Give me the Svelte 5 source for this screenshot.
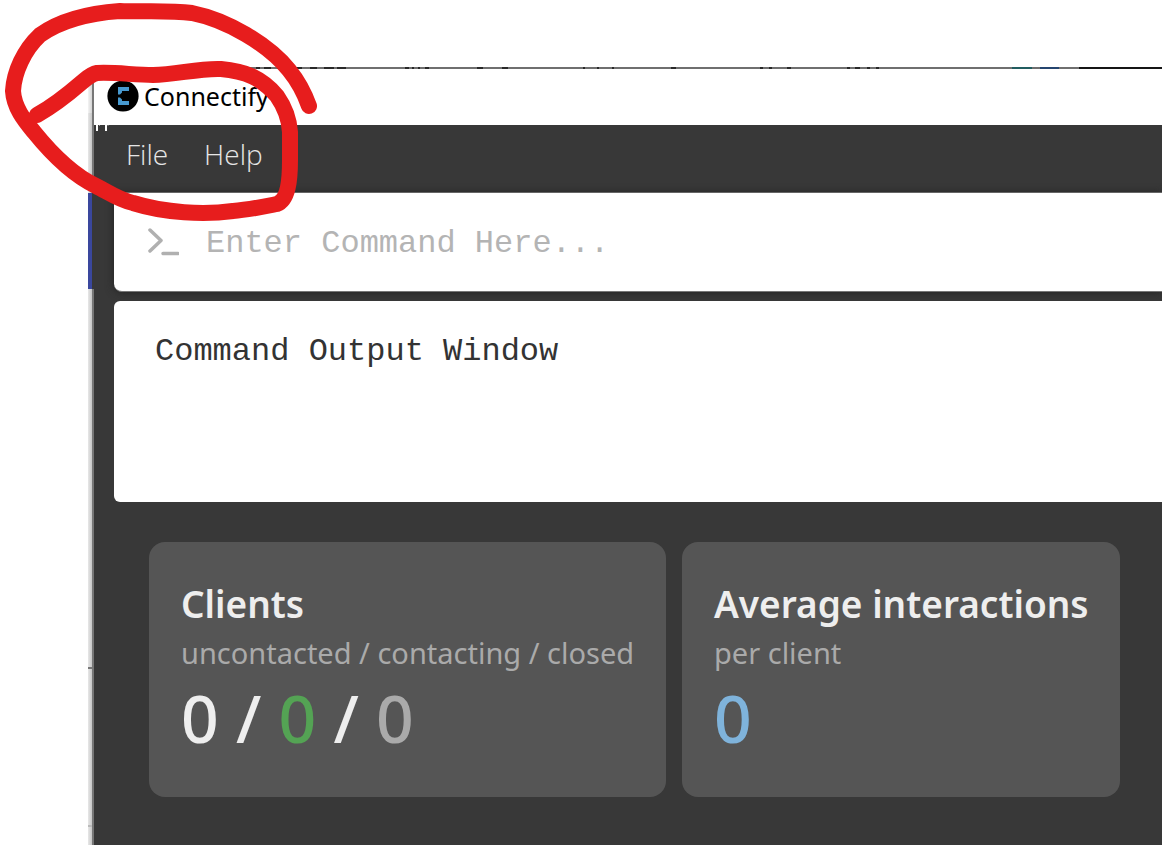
<script>
  const menus = ['File', 'Help'];
  let command = $state('');
</script>

<div class="desktop">
  <div class="edge" aria-hidden="true">
    <i class="light"></i>
    <i class="pale"></i>
    <i class="blue"></i>
    <i class="long"></i>
    <i class="tick"></i>
    <i class="mid"></i>
    <i class="tick faint"></i>
    <i class="rest"></i>
  </div>

  <div class="window">
    <div class="topline" aria-hidden="true">
      <svg viewBox="0 0 890 2" width="890" height="2">
        <path d="M162 1h4M170 1h7M183 1h8M200 1h8M216 1h7M230 1h10M243 1h9M311 1h4M318 1h2M324 1h2M331 1h4M383 1h6M408 1h6M489 1h2M503 1h2M518 1h2M577 1h5M666 1h3M675 1h3M693 1h4M753 1h3M761 1h5M773 1h3M782 1h3" stroke="#292929" stroke-width="2" />
      </svg>
    </div>
    <header class="titlebar">
      <svg class="logo" viewBox="0 0 32 32" aria-hidden="true">
        <circle cx="16" cy="16" r="15.6" fill="#000" />
        <path d="M11 7h11v4h-7v1.500l-2 2h-2zM11 17.500h2l2 2V21h7v4H11z" fill="#4799cf" />
      </svg>
      <span>Connectify</span>
    </header>

    <nav class="menubar">
      {#each menus as menu}
        <button type="button">{menu}</button>
      {/each}
      <svg class="fragment" viewBox="0 0 14 6" aria-hidden="true">
        <path d="M2 0v6M11 0v6" stroke="#fff" stroke-width="2" />
        <path d="M4.500 0v1M13 0v1" stroke="#999" />
      </svg>
    </nav>

    <main>
      <label class="command">
        <svg viewBox="0 0 32 30" aria-hidden="true">
          <path d="M3 3l11 10.500L3 24M16 26.500h15" fill="none" stroke="#b0b0b0" stroke-width="3.500" stroke-linecap="round" stroke-linejoin="round" />
        </svg>
        <input type="text" aria-label="Command" placeholder="Enter Command Here..." bind:value={command} />
      </label>

      <section class="output">Command Output Window</section>

      <div class="cards">
        <section class="card">
          <h2>Clients</h2>
          <p class="caption">uncontacted / contacting / closed</p>
          <p class="figures">0 / <span class="green">0</span> / <span class="gray">0</span></p>
        </section>
        <section class="card">
          <h2>Average interactions</h2>
          <p class="caption">per client</p>
          <p class="figures"><span class="sky">0</span></p>
        </section>
      </div>
    </main>
  </div>

  <svg class="scribble" viewBox="0 0 330 230" aria-hidden="true">
    <path d="M309 106C304 92 298 81 289 70C268 44 227 20 192 13C168 10 143 12 120 11C92 13 61 20 40 35C24 50 14 72 13 91C14 108 25 121 34 132C51 153 71 174 96 186C108 192 119 200 133 203C165 213 204 215 233 211C248 210 262 207 277 204C288 200 290 180 290 160V132C289 116 284 106 277 96C262 78 245 71 221 69C198 68 176 75 153 75C134 75 115 72 97 73C91 74 86 79 81 83C66 96 53 106 37 115" />
  </svg>
</div>

<style>
  :global(body) {
    margin: 0;
    background: #fff;
  }
  .desktop {
    position: relative;
    display: flex;
    min-height: 100vh;
    box-sizing: border-box;
    padding-top: 67px;
    overflow: hidden;
    font-family: 'Noto Sans', sans-serif;
  }
  .edge {
    display: flex;
    flex-direction: column;
    width: 6px;
    margin-left: 88px;
    padding-top: 16px;
    box-sizing: border-box;
    background: #fff;
  }
  .edge i {
    box-sizing: border-box;
    border-right: 2px solid #777;
    background: linear-gradient(90deg, #e8e8e8, #c6c6c6);
  }
  .edge .light {
    height: 30px;
    background: linear-gradient(90deg, #f4f4f4, #d4d4d4);
  }
  .edge .pale {
    height: 80px;
  }
  .edge .blue {
    height: 96px;
    border-color: #383838;
    background: #3a479d;
  }
  .edge .long {
    height: 378px;
  }
  .edge .tick {
    height: 2px;
    background: #777;
  }
  .edge .mid {
    height: 156px;
  }
  .edge .faint {
    background: #bbb;
  }
  .edge .rest {
    flex: 1;
  }
  .window {
    display: flex;
    flex: 1;
    flex-direction: column;
    min-width: 0;
    background: #383838;
  }
  .topline {
    height: 2px;
    overflow: hidden;
    background:
      linear-gradient(#151515, #151515) right / 83px 2px no-repeat,
      linear-gradient(#215d60, #215d60) right 130px top / 20px 2px no-repeat,
      linear-gradient(#25456f, #25456f) right 103px top / 19px 2px no-repeat,
      #6f6f6f;
  }
  .topline svg {
    display: block;
  }
  .titlebar {
    display: flex;
    align-items: center;
    gap: 5px;
    height: 56px;
    padding: 0 13px 2px;
    box-sizing: border-box;
    background: #fff;
    color: #000;
    font-size: 25px;
    line-height: 32px;
  }
  .logo {
    width: 32px;
    height: 32px;
  }
  .menubar {
    position: relative;
    display: flex;
    align-items: center;
    gap: 36px;
    height: 68px;
    padding: 0 32px 10px;
    box-sizing: border-box;
    border-bottom: 1px solid #666;
  }
  .menubar button {
    padding: 0;
    border: 0;
    background: none;
    color: #e6e6e6;
    font: 300 28px/40px 'Open Sans', sans-serif;
  }
  .fragment {
    position: absolute;
    top: 0;
    left: 1px;
    width: 14px;
    height: 6px;
  }
  main {
    display: flex;
    flex: 1;
    flex-direction: column;
    padding-left: 20px;
  }
  .command {
    display: flex;
    align-items: center;
    gap: 27px;
    height: 99px;
    padding-left: 33px;
    box-sizing: border-box;
    background: #fff;
    border-bottom: 1px solid #777;
    border-radius: 0 0 0 8px;
    box-shadow: 0 0 8px #222;
  }
  .command svg {
    width: 32px;
    height: 30px;
    flex: none;
  }
  .command input {
    flex: 1;
    min-width: 0;
    padding: 4px 0 0;
    border: 0;
    outline: 0;
    background: none;
    color: #333;
    font: 32px/40px 'Liberation Mono', monospace;
  }
  .command input::placeholder {
    color: #b4b4b4;
    opacity: 1;
  }
  .output {
    height: 201px;
    margin-top: 9px;
    padding: 31px 41px;
    box-sizing: border-box;
    background: #fff;
    border-radius: 6px 0 0 6px;
    color: #333;
    font: 32px/40px 'Liberation Mono', monospace;
  }
  .cards {
    display: grid;
    grid-template-columns: 517fr 438fr;
    gap: 16px;
    padding: 40px 42px 48px 35px;
  }
  .card {
    min-width: 0;
    padding: 37px 32px 40px;
    background: #555;
    border-radius: 16px;
    color: #eee;
    white-space: nowrap;
  }
  h2 {
    margin: 0;
    font-size: 37px;
    font-weight: 600;
    line-height: 50px;
  }
  .caption {
    margin: 0;
    color: #aaa;
    font-size: 29px;
    line-height: 48px;
  }
  .figures {
    margin: 0;
    font-size: 66px;
    font-weight: 500;
    line-height: 80px;
  }
  .green {
    color: #54a354;
  }
  .gray {
    color: #aaa;
  }
  .sky {
    color: #7fb3db;
  }
  .scribble {
    position: absolute;
    top: 0;
    left: 0;
    width: 330px;
    height: 230px;
    pointer-events: none;
  }
  .scribble path {
    fill: none;
    stroke: #e71d1d;
    stroke-width: 16;
    stroke-linecap: round;
    stroke-linejoin: round;
  }
</style>
